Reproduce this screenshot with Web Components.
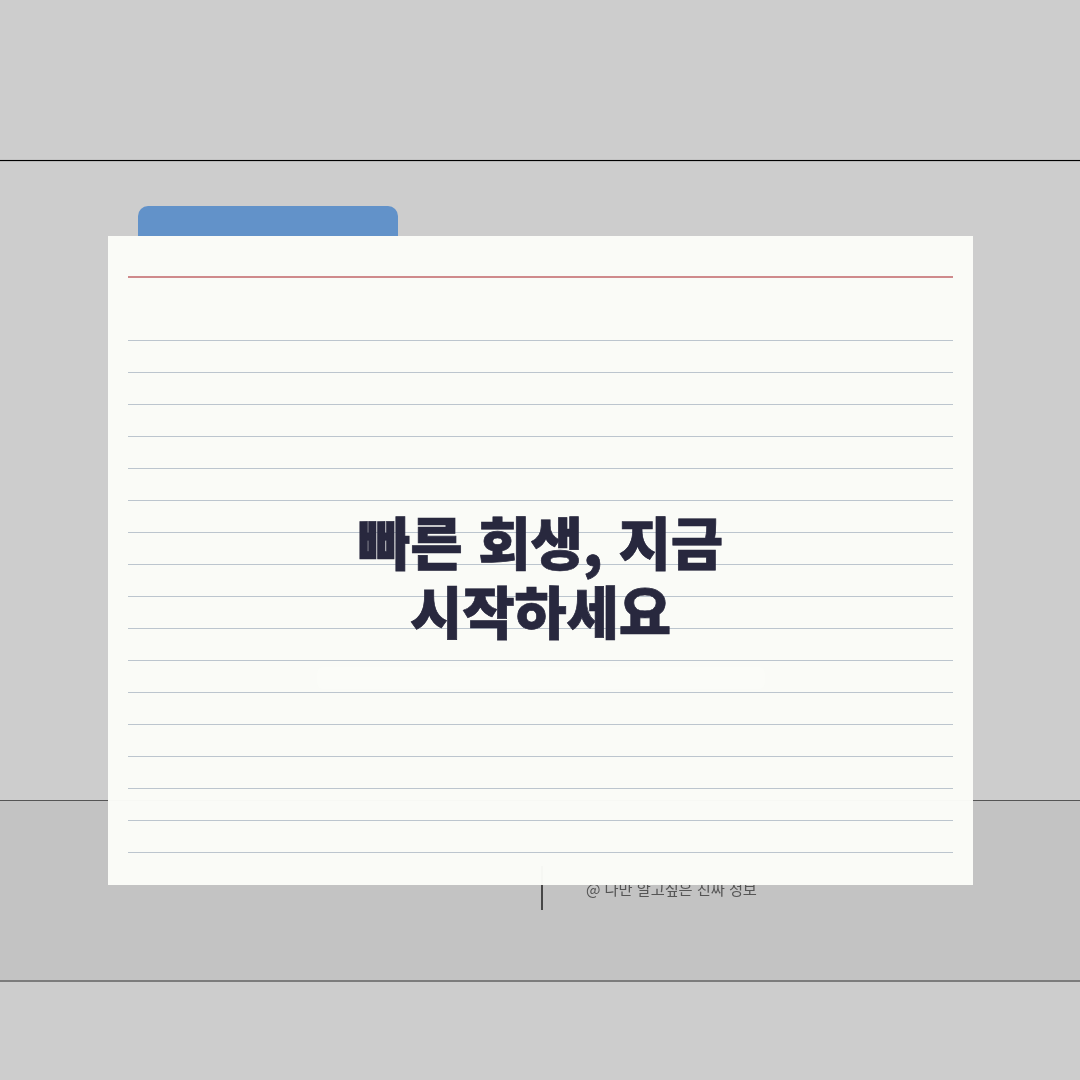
<!DOCTYPE html>
<html lang="ko"><head><meta charset="utf-8">
<style>html,body{margin:0;padding:0;background:#cdcdcd}</style></head>
<body>
<template id="t-backdrop"><style>
:host{display:flex;flex-direction:column;width:1080px;height:1080px;background:#cdcdcd;overflow:hidden;position:relative;font-family:"Noto Sans CJK KR","Noto Sans",sans-serif}
.top{height:160px;flex:none}
.rule1{height:1px;background:#000;flex:none;box-shadow:0 1px 0 #b8b8b8,0 -1px 0 #c2c2c2}
.mid{height:639px;flex:none}
.band{height:182px;flex:none;background:#c3c3c3;border-top:1px solid #555;border-bottom:2px solid #7c7c7c;box-sizing:border-box;display:flex;justify-content:flex-start;padding:65px 0 0 541px}
.bar{width:2px;height:44px;background:#474747;flex:none;filter:blur(.5px)}
.credit{margin:11px 0 0 43px;font-size:15.3px;line-height:22px;height:22px;color:#555;filter:blur(.6px);white-space:nowrap;letter-spacing:-.1px}
</style>
<div class="top"></div><div class="rule1"></div><div class="mid"></div>
<div class="band"><div class="bar"></div><div class="credit">@ 나만 알고싶은 진짜 정보</div></div>
<slot></slot></template>

<template id="t-card"><style>
:host{display:block;position:absolute;left:108px;top:206px;width:865px;height:679px}
.tab{position:absolute;left:30px;top:0;width:260px;height:30px;background:#6292c9;border-radius:10px 10px 0 0}
.sheet{position:absolute;left:0;top:30px;width:865px;height:649px;box-sizing:border-box;padding:40px 20px 0;background:rgba(251,252,248,.975)}
.red{height:2px;background:#cf8a8c;margin-bottom:62px}
</style>
<div class="tab"></div><div class="sheet"><div class="red"></div><slot name="rules"></slot><slot></slot></div></template>

<template id="t-rules"><style>
:host{display:flex;flex-direction:column;gap:31px}
i{display:block;height:1px;background:#bcc5ce}
</style><div id="r" style="display:contents"></div></template>

<template id="t-title"><style>
:host{display:flex;flex-direction:column;align-items:center;position:absolute;left:0;right:0;top:270px;font-family:"Noto Sans CJK KR","Noto Sans",sans-serif}
h1{margin:0;font-size:57px;line-height:69px;font-weight:900;color:#28283e;text-align:center;letter-spacing:-.2px;-webkit-text-stroke:.7px #28283e}
.ghost{width:448px;height:22px;margin-top:23px;background:rgba(253,254,250,.35);border-radius:6px}
</style><h1><slot></slot></h1><div class="ghost"></div></template>

<note-backdrop>
  <note-card>
    <note-rules slot="rules"></note-rules>
    <note-title>빠른 회생, 지금<br>시작하세요</note-title>
  </note-card>
</note-backdrop>

<script>
function def(name,tid,init){customElements.define(name,class extends HTMLElement{constructor(){super();const s=this.attachShadow({mode:'open'});s.appendChild(document.getElementById(tid).content.cloneNode(true));if(init)init(s);}});}
def('note-backdrop','t-backdrop');
def('note-card','t-card');
def('note-rules','t-rules',s=>{const r=s.getElementById('r');for(let k=0;k<17;k++)r.appendChild(document.createElement('i'));});
def('note-title','t-title');
</script>
</body></html>
